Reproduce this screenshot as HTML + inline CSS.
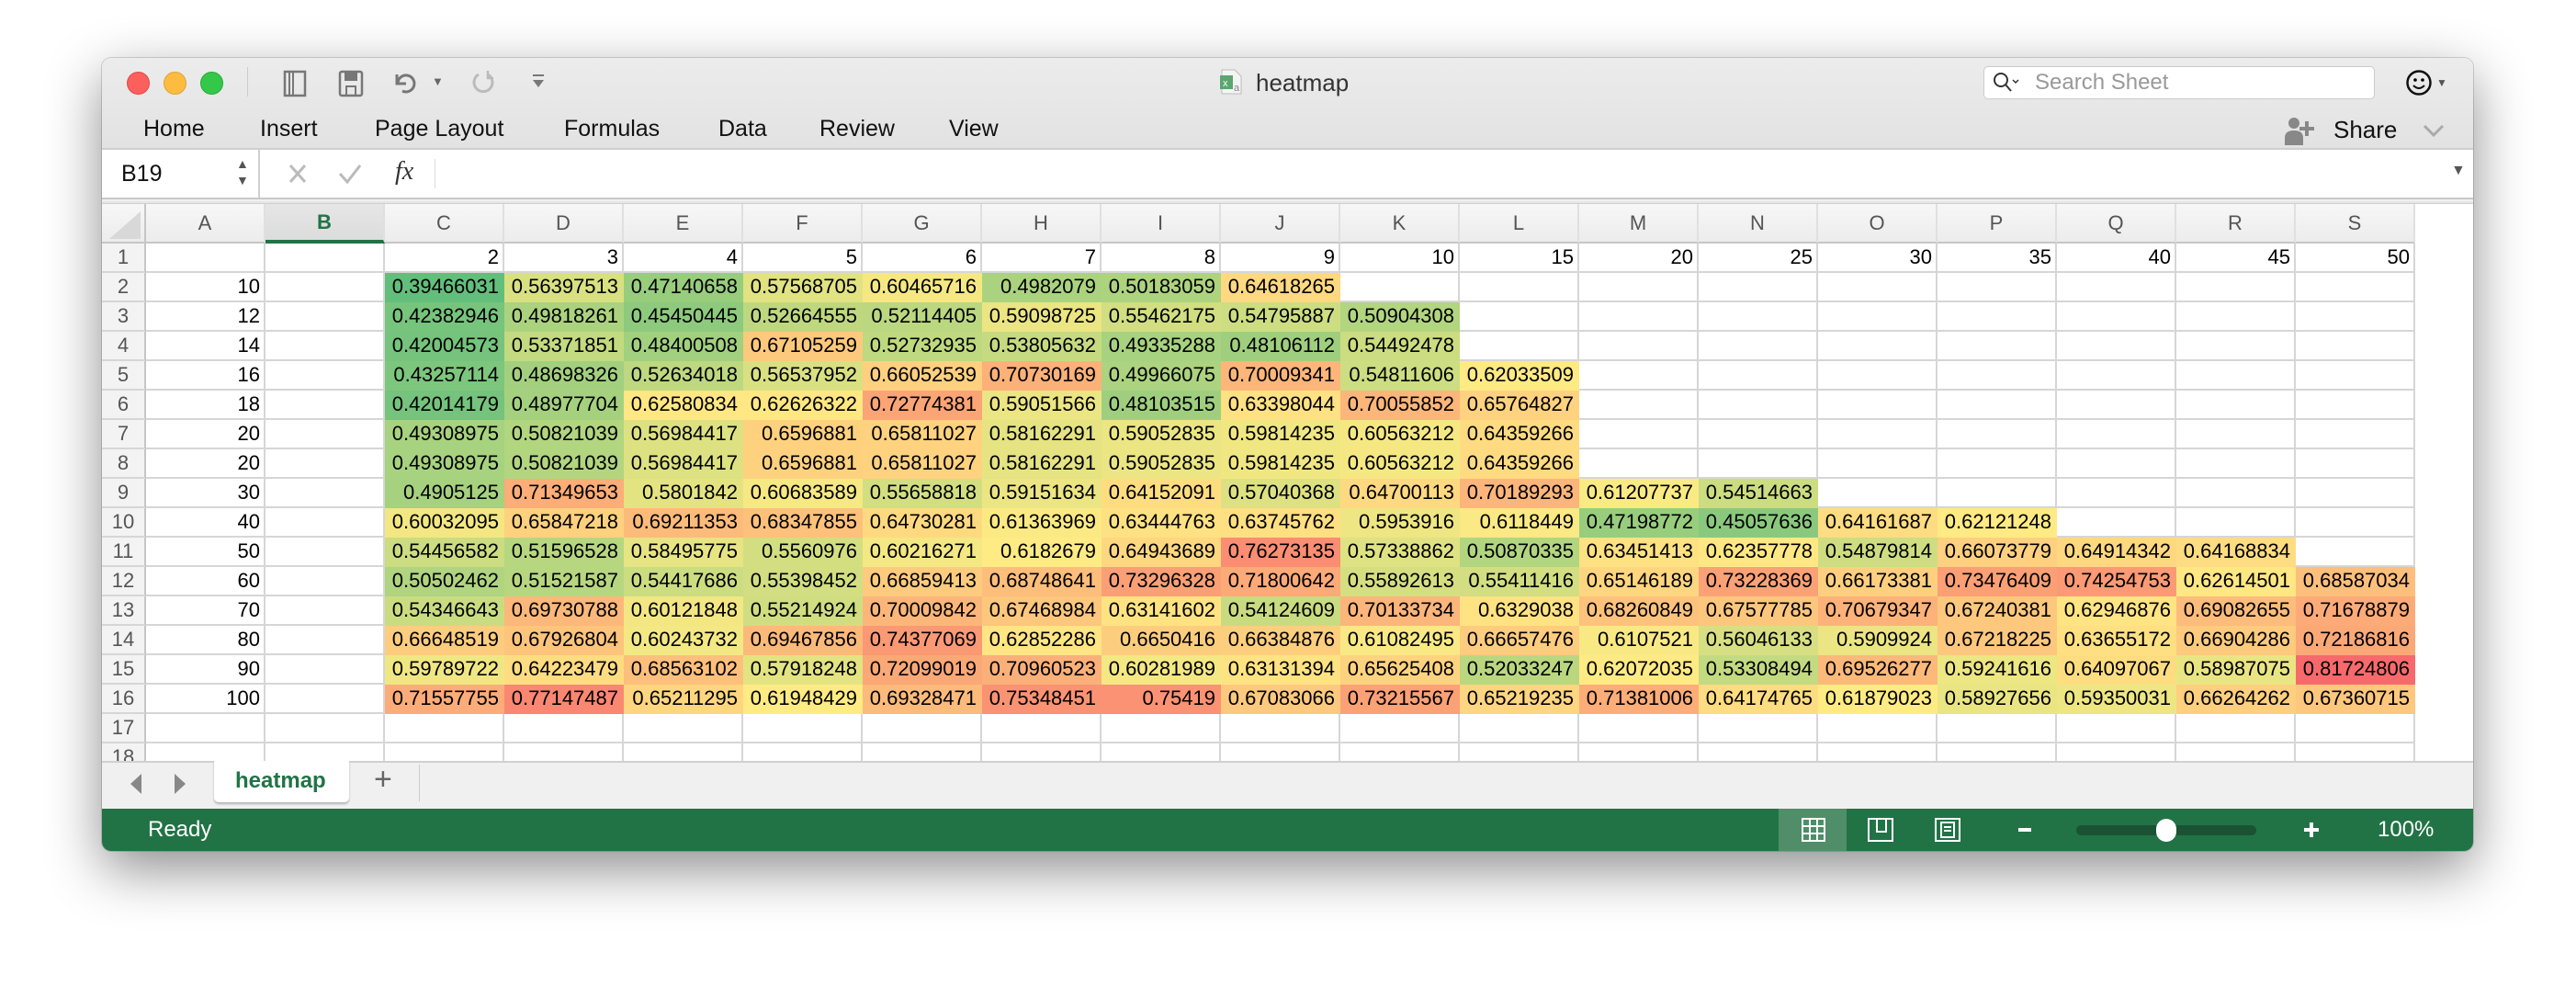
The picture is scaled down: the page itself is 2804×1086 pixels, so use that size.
<!DOCTYPE html>
<html><head><meta charset="utf-8">
<style>
*{box-sizing:border-box;margin:0;padding:0}
body{width:2804px;height:1086px;background:#fff;position:relative;overflow:hidden;font-family:"Liberation Sans",sans-serif}
#win{position:absolute;left:111px;top:63px;width:2581px;height:863px;border-radius:10px;overflow:hidden;box-shadow:0 20px 60px rgba(0,0,0,.45),0 0 0 1px rgba(0,0,0,.15);background:#f0f0f0}
.abs{position:absolute}
#top{left:0;top:0;width:2581px;height:100px;background:linear-gradient(#ececec,#e2e2e2);border-bottom:2px solid #cfcfcf}
.tl{position:absolute;top:15px;width:25px;height:25px;border-radius:50%}
.tab{position:absolute;top:63px;font-size:25px;color:#111}
#fbar{left:0;top:100px;width:2581px;height:54px;background:#fff;border-bottom:2px solid #c8c8c8}
#sep{left:0;top:156px;width:2581px;height:3px;background:#e6e6e6;border-bottom:1px solid #cfcfcf}
#gridwrap{left:0;top:159px;width:2581px;height:606px;overflow:hidden;background:#fff}
table{border-collapse:separate;border-spacing:0;table-layout:fixed;width:2518px}
td{height:32px;border-right:2px solid #d6d6d6;border-bottom:2px solid #d6d6d6;font-size:22px;text-align:right;padding:0 4px;white-space:nowrap;overflow:hidden;color:#000}
tr.h td{height:43px;background:linear-gradient(#f7f7f7,#ececec);color:#555;text-align:center;border-bottom:2px solid #c6c6c6;border-right:2px solid #e0e0e0}
td.rh{background:#f3f3f3;color:#555;text-align:center;padding:0;border-right:2px solid #c6c6c6}
tr.h td.sel{background:linear-gradient(#e6e6e6,#dcdcdc);color:#217346;font-weight:bold;border-bottom:4px solid #217346}
#tabs{left:0;top:765px;width:2581px;height:52px;background:#f0f0f0}
#status{left:0;top:817px;width:2581px;height:46px;background:#217346}
</style></head><body>
<div id="win">
 <div id="top" class="abs">
  <div class="tl" style="left:27px;background:#fc605c;border:1px solid #de4a46"></div>
  <div class="tl" style="left:67px;background:#fdbc40;border:1px solid #dea236"></div>
  <div class="tl" style="left:107px;background:#34c84a;border:1px solid #27aa35"></div>
  <div class="abs" style="left:158px;top:10px;width:1px;height:32px;background:#ccc"></div>
  <svg class="abs" style="left:195px;top:13px" width="30" height="30" viewBox="0 0 30 30"><rect x="4" y="2" width="22" height="26" fill="none" stroke="#777" stroke-width="2.5"/><path d="M9 2v26M13 2v26" stroke="#777" stroke-width="2"/></svg>
  <svg class="abs" style="left:256px;top:13px" width="30" height="30" viewBox="0 0 30 30"><rect x="3" y="2" width="24" height="26" rx="2" fill="none" stroke="#777" stroke-width="2.5"/><rect x="8" y="2" width="14" height="10" fill="#777"/><rect x="10" y="18" width="10" height="10" fill="none" stroke="#777" stroke-width="2"/></svg>
  <svg class="abs" style="left:315px;top:14px" width="30" height="26" viewBox="0 0 30 26"><path d="M6 4v10h10" fill="none" stroke="#777" stroke-width="3"/><path d="M7 13a9 9 0 1 1 5 9" fill="none" stroke="#777" stroke-width="3"/></svg>
  <div class="abs" style="left:359px;top:18px;font-size:13px;color:#666">▼</div>
  <svg class="abs" style="left:400px;top:12px" width="28" height="30" viewBox="0 0 28 30"><path d="M20 6a10 10 0 1 1-10 0" fill="none" stroke="#bbb" stroke-width="3"/><path d="M20 2v8h6" fill="none" stroke="#bbb" stroke-width="2.5"/></svg>
  <svg class="abs" style="left:467px;top:17px" width="16" height="20" viewBox="0 0 16 20"><path d="M2 2h12" stroke="#777" stroke-width="2"/><path d="M2 7h12l-6 8z" fill="#777"/></svg>
  <svg class="abs" style="left:1216px;top:12px" width="28" height="28" viewBox="0 0 28 28"><path d="M3 1h14l7 7v19H3z" fill="#f4f4f4" stroke="#bbb"/><rect x="1" y="7" width="14" height="15" fill="#5aa670"/><text x="4" y="19" font-size="11" fill="#fff" font-family="Liberation Sans">x</text><text x="16" y="24" font-size="11" fill="#888" font-family="Liberation Sans">a</text></svg>
  <div class="abs" style="left:1256px;top:12px;font-size:26px;color:#333">heatmap</div>
  <div class="abs" style="left:2048px;top:9px;width:426px;height:36px;background:#fff;border:1px solid #ccc;border-radius:5px"></div>
  <svg class="abs" style="left:2058px;top:15px" width="30" height="26" viewBox="0 0 30 26"><circle cx="9" cy="9" r="7" fill="none" stroke="#333" stroke-width="2"/><path d="M14 14l6 7" stroke="#333" stroke-width="2"/><path d="M22 9l3 3 3-3" fill="none" stroke="#333" stroke-width="1.5"/></svg>
  <div class="abs" style="left:2104px;top:13px;font-size:24px;color:#999">Search Sheet</div>
  <svg class="abs" style="left:2507px;top:12px" width="30" height="30" viewBox="0 0 30 30"><circle cx="15" cy="15" r="12.5" fill="none" stroke="#111" stroke-width="2.5"/><circle cx="11" cy="12" r="1.8"/><circle cx="19" cy="12" r="1.8"/><path d="M9 18q6 6 12 0" fill="none" stroke="#111" stroke-width="2"/></svg>
  <div class="abs" style="left:2541px;top:20px;font-size:12px;color:#555">▼</div>
  <svg class="abs" style="left:2376px;top:63px" width="36" height="32" viewBox="0 0 36 32"><circle cx="10" cy="8" r="6" fill="#888"/><path d="M0 32v-8q0-8 10-8t10 8v8z" fill="#888"/><path d="M24 6v16M16 14h16" stroke="#888" stroke-width="4"/></svg>
  <div class="abs" style="left:2429px;top:63px;font-size:26px;color:#111">Share</div>
  <svg class="abs" style="left:2526px;top:72px" width="24" height="16" viewBox="0 0 24 16"><path d="M2 2l10 10 10-10" fill="none" stroke="#aaa" stroke-width="3"/></svg>
  <div class="tab" style="left:45px">Home</div>
  <div class="tab" style="left:172px">Insert</div>
  <div class="tab" style="left:297px">Page Layout</div>
  <div class="tab" style="left:503px">Formulas</div>
  <div class="tab" style="left:671px">Data</div>
  <div class="tab" style="left:781px">Review</div>
  <div class="tab" style="left:922px">View</div>
 </div>
 <div id="fbar" class="abs">
  <div class="abs" style="left:0;top:0;width:172px;height:52px;border-right:2px solid #d0d0d0"></div>
  <div class="abs" style="left:21px;top:12px;font-size:25px;color:#111">B19</div>
  <div class="abs" style="left:146px;top:6px;font-size:14px;color:#555;line-height:18px">▲<br>▼</div>
  <svg class="abs" style="left:202px;top:14px" width="22" height="24" viewBox="0 0 22 24"><path d="M3 3l16 18M19 3L3 21" stroke="#bbb" stroke-width="3"/></svg>
  <svg class="abs" style="left:256px;top:14px" width="28" height="24" viewBox="0 0 28 24"><path d="M3 12l8 9L25 3" fill="none" stroke="#bbb" stroke-width="3"/></svg>
  <div class="abs" style="left:319px;top:8px;font-size:28px;font-style:italic;font-family:'Liberation Serif',serif;color:#333">fx</div>
  <div class="abs" style="left:362px;top:10px;width:1px;height:32px;background:#ddd"></div>
  <div class="abs" style="left:2557px;top:14px;font-size:16px;color:#555">▼</div>
 </div>
 <div id="sep" class="abs"></div>
 <div id="gridwrap" class="abs">
 <table id="g">
 <colgroup><col style="width:48px"><col style="width:130px" span="19"></colgroup>
 <tr class="h"><td style="position:relative;border-right:2px solid #c6c6c6"><svg style="position:absolute;left:8px;top:8px" width="34" height="30"><path d="M34 0V30H0z" fill="#d8d8d8"/></svg></td><td>A</td><td class="sel">B</td><td>C</td><td>D</td><td>E</td><td>F</td><td>G</td><td>H</td><td>I</td><td>J</td><td>K</td><td>L</td><td>M</td><td>N</td><td>O</td><td>P</td><td>Q</td><td>R</td><td>S</td><td>T</td></tr>
 <tr><td class="rh">1</td><td></td><td></td><td>2</td><td>3</td><td>4</td><td>5</td><td>6</td><td>7</td><td>8</td><td>9</td><td>10</td><td>15</td><td>20</td><td>25</td><td>30</td><td>35</td><td>40</td><td>45</td><td>50</td><td></td></tr>
 <tr><td class="rh">2</td><td>10</td><td></td><td class="v">0.39466031</td><td class="v">0.56397513</td><td class="v">0.47140658</td><td class="v">0.57568705</td><td class="v">0.60465716</td><td class="v">0.4982079</td><td class="v">0.50183059</td><td class="v">0.64618265</td><td></td><td></td><td></td><td></td><td></td><td></td><td></td><td></td><td></td><td></td></tr>
 <tr><td class="rh">3</td><td>12</td><td></td><td class="v">0.42382946</td><td class="v">0.49818261</td><td class="v">0.45450445</td><td class="v">0.52664555</td><td class="v">0.52114405</td><td class="v">0.59098725</td><td class="v">0.55462175</td><td class="v">0.54795887</td><td class="v">0.50904308</td><td></td><td></td><td></td><td></td><td></td><td></td><td></td><td></td><td></td></tr>
 <tr><td class="rh">4</td><td>14</td><td></td><td class="v">0.42004573</td><td class="v">0.53371851</td><td class="v">0.48400508</td><td class="v">0.67105259</td><td class="v">0.52732935</td><td class="v">0.53805632</td><td class="v">0.49335288</td><td class="v">0.48106112</td><td class="v">0.54492478</td><td></td><td></td><td></td><td></td><td></td><td></td><td></td><td></td><td></td></tr>
 <tr><td class="rh">5</td><td>16</td><td></td><td class="v">0.43257114</td><td class="v">0.48698326</td><td class="v">0.52634018</td><td class="v">0.56537952</td><td class="v">0.66052539</td><td class="v">0.70730169</td><td class="v">0.49966075</td><td class="v">0.70009341</td><td class="v">0.54811606</td><td class="v">0.62033509</td><td></td><td></td><td></td><td></td><td></td><td></td><td></td><td></td></tr>
 <tr><td class="rh">6</td><td>18</td><td></td><td class="v">0.42014179</td><td class="v">0.48977704</td><td class="v">0.62580834</td><td class="v">0.62626322</td><td class="v">0.72774381</td><td class="v">0.59051566</td><td class="v">0.48103515</td><td class="v">0.63398044</td><td class="v">0.70055852</td><td class="v">0.65764827</td><td></td><td></td><td></td><td></td><td></td><td></td><td></td><td></td></tr>
 <tr><td class="rh">7</td><td>20</td><td></td><td class="v">0.49308975</td><td class="v">0.50821039</td><td class="v">0.56984417</td><td class="v">0.6596881</td><td class="v">0.65811027</td><td class="v">0.58162291</td><td class="v">0.59052835</td><td class="v">0.59814235</td><td class="v">0.60563212</td><td class="v">0.64359266</td><td></td><td></td><td></td><td></td><td></td><td></td><td></td><td></td></tr>
 <tr><td class="rh">8</td><td>20</td><td></td><td class="v">0.49308975</td><td class="v">0.50821039</td><td class="v">0.56984417</td><td class="v">0.6596881</td><td class="v">0.65811027</td><td class="v">0.58162291</td><td class="v">0.59052835</td><td class="v">0.59814235</td><td class="v">0.60563212</td><td class="v">0.64359266</td><td></td><td></td><td></td><td></td><td></td><td></td><td></td><td></td></tr>
 <tr><td class="rh">9</td><td>30</td><td></td><td class="v">0.4905125</td><td class="v">0.71349653</td><td class="v">0.5801842</td><td class="v">0.60683589</td><td class="v">0.55658818</td><td class="v">0.59151634</td><td class="v">0.64152091</td><td class="v">0.57040368</td><td class="v">0.64700113</td><td class="v">0.70189293</td><td class="v">0.61207737</td><td class="v">0.54514663</td><td></td><td></td><td></td><td></td><td></td><td></td></tr>
 <tr><td class="rh">10</td><td>40</td><td></td><td class="v">0.60032095</td><td class="v">0.65847218</td><td class="v">0.69211353</td><td class="v">0.68347855</td><td class="v">0.64730281</td><td class="v">0.61363969</td><td class="v">0.63444763</td><td class="v">0.63745762</td><td class="v">0.5953916</td><td class="v">0.6118449</td><td class="v">0.47198772</td><td class="v">0.45057636</td><td class="v">0.64161687</td><td class="v">0.62121248</td><td></td><td></td><td></td><td></td></tr>
 <tr><td class="rh">11</td><td>50</td><td></td><td class="v">0.54456582</td><td class="v">0.51596528</td><td class="v">0.58495775</td><td class="v">0.5560976</td><td class="v">0.60216271</td><td class="v">0.6182679</td><td class="v">0.64943689</td><td class="v">0.76273135</td><td class="v">0.57338862</td><td class="v">0.50870335</td><td class="v">0.63451413</td><td class="v">0.62357778</td><td class="v">0.54879814</td><td class="v">0.66073779</td><td class="v">0.64914342</td><td class="v">0.64168834</td><td></td><td></td></tr>
 <tr><td class="rh">12</td><td>60</td><td></td><td class="v">0.50502462</td><td class="v">0.51521587</td><td class="v">0.54417686</td><td class="v">0.55398452</td><td class="v">0.66859413</td><td class="v">0.68748641</td><td class="v">0.73296328</td><td class="v">0.71800642</td><td class="v">0.55892613</td><td class="v">0.55411416</td><td class="v">0.65146189</td><td class="v">0.73228369</td><td class="v">0.66173381</td><td class="v">0.73476409</td><td class="v">0.74254753</td><td class="v">0.62614501</td><td class="v">0.68587034</td><td></td></tr>
 <tr><td class="rh">13</td><td>70</td><td></td><td class="v">0.54346643</td><td class="v">0.69730788</td><td class="v">0.60121848</td><td class="v">0.55214924</td><td class="v">0.70009842</td><td class="v">0.67468984</td><td class="v">0.63141602</td><td class="v">0.54124609</td><td class="v">0.70133734</td><td class="v">0.6329038</td><td class="v">0.68260849</td><td class="v">0.67577785</td><td class="v">0.70679347</td><td class="v">0.67240381</td><td class="v">0.62946876</td><td class="v">0.69082655</td><td class="v">0.71678879</td><td></td></tr>
 <tr><td class="rh">14</td><td>80</td><td></td><td class="v">0.66648519</td><td class="v">0.67926804</td><td class="v">0.60243732</td><td class="v">0.69467856</td><td class="v">0.74377069</td><td class="v">0.62852286</td><td class="v">0.6650416</td><td class="v">0.66384876</td><td class="v">0.61082495</td><td class="v">0.66657476</td><td class="v">0.6107521</td><td class="v">0.56046133</td><td class="v">0.5909924</td><td class="v">0.67218225</td><td class="v">0.63655172</td><td class="v">0.66904286</td><td class="v">0.72186816</td><td></td></tr>
 <tr><td class="rh">15</td><td>90</td><td></td><td class="v">0.59789722</td><td class="v">0.64223479</td><td class="v">0.68563102</td><td class="v">0.57918248</td><td class="v">0.72099019</td><td class="v">0.70960523</td><td class="v">0.60281989</td><td class="v">0.63131394</td><td class="v">0.65625408</td><td class="v">0.52033247</td><td class="v">0.62072035</td><td class="v">0.53308494</td><td class="v">0.69526277</td><td class="v">0.59241616</td><td class="v">0.64097067</td><td class="v">0.58987075</td><td class="v">0.81724806</td><td></td></tr>
 <tr><td class="rh">16</td><td>100</td><td></td><td class="v">0.71557755</td><td class="v">0.77147487</td><td class="v">0.65211295</td><td class="v">0.61948429</td><td class="v">0.69328471</td><td class="v">0.75348451</td><td class="v">0.75419</td><td class="v">0.67083066</td><td class="v">0.73215567</td><td class="v">0.65219235</td><td class="v">0.71381006</td><td class="v">0.64174765</td><td class="v">0.61879023</td><td class="v">0.58927656</td><td class="v">0.59350031</td><td class="v">0.66264262</td><td class="v">0.67360715</td><td></td></tr>
 <tr><td class="rh">17</td><td></td><td></td><td></td><td></td><td></td><td></td><td></td><td></td><td></td><td></td><td></td><td></td><td></td><td></td><td></td><td></td><td></td><td></td><td></td><td></td></tr>
 <tr><td class="rh">18</td><td></td><td></td><td></td><td></td><td></td><td></td><td></td><td></td><td></td><td></td><td></td><td></td><td></td><td></td><td></td><td></td><td></td><td></td><td></td><td></td></tr>
 </table>
 </div>
 <div id="tabs" class="abs">
  <div class="abs" style="left:0;top:0;width:2581px;height:2px;background:#d0d0d0"></div>
  <svg class="abs" style="left:31px;top:14px" width="14" height="22"><path d="M12 0v22L0 11z" fill="#888"/></svg>
  <svg class="abs" style="left:77px;top:14px" width="14" height="22"><path d="M2 0v22l12-11z" fill="#888"/></svg>
  <div class="abs" style="left:122px;top:0;width:147px;height:45px;background:#fff;border-radius:0 0 5px 5px;box-shadow:0 2px 2px rgba(0,0,0,.25)"></div>
  <div class="abs" style="left:145px;top:8px;font-size:24px;font-weight:bold;color:#217346">heatmap</div>
  <div class="abs" style="left:296px;top:1px;font-size:34px;color:#666">+</div>
  <div class="abs" style="left:345px;top:4px;width:1px;height:40px;background:#ccc"></div>
 </div>
 <div id="status" class="abs">
  <div class="abs" style="left:50px;top:9px;font-size:24px;color:#fff">Ready</div>
  <div class="abs" style="left:1825px;top:0;width:74px;height:46px;background:#4f8e68"></div>
  <svg class="abs" style="left:1850px;top:10px" width="26" height="26" viewBox="0 0 26 26"><rect x="1" y="1" width="24" height="24" fill="none" stroke="#fff" stroke-width="2"/><path d="M9 1v24M17 1v24M1 9h24M1 17h24" stroke="#fff" stroke-width="2"/></svg>
  <svg class="abs" style="left:1922px;top:10px" width="28" height="26" viewBox="0 0 28 26"><rect x="1" y="1" width="26" height="24" fill="none" stroke="#fff" stroke-width="2"/><path d="M10 1v14h10V1" fill="none" stroke="#fff" stroke-width="2"/></svg>
  <svg class="abs" style="left:1995px;top:10px" width="28" height="26" viewBox="0 0 28 26"><rect x="1" y="1" width="26" height="24" fill="none" stroke="#fff" stroke-width="2"/><rect x="7" y="5" width="14" height="16" fill="none" stroke="#fff" stroke-width="2"/><path d="M10 10h8M10 14h8" stroke="#fff" stroke-width="2"/></svg>
  <div class="abs" style="left:2086px;top:21px;width:14px;height:4px;background:#fff"></div>
  <div class="abs" style="left:2149px;top:18px;width:196px;height:11px;border-radius:6px;background:#1a5233"></div>
  <div class="abs" style="left:2236px;top:11px;width:22px;height:25px;border-radius:11px;background:#fff"></div>
  <div class="abs" style="left:2397px;top:21px;width:16px;height:4px;background:#fff"></div>
  <div class="abs" style="left:2403px;top:15px;width:4px;height:16px;background:#fff"></div>
  <div class="abs" style="left:2477px;top:9px;font-size:24px;color:#fff">100%</div>
 </div>
</div>
<script>
(function(){
 var cells=[].slice.call(document.querySelectorAll('td.v'));
 var vals=cells.map(function(c){return parseFloat(c.textContent)});
 var s=vals.slice().sort(function(a,b){return a-b});
 var mn=s[0],mx=s[s.length-1];
 var n=s.length,p=(n-1)*0.5,lo=Math.floor(p),md=s[lo]+(s[Math.min(lo+1,n-1)]-s[lo])*(p-lo);
 var G=[99,190,123],Y=[255,235,132],R=[248,105,107];
 function mix(a,b,t){return a.map(function(x,i){return Math.round(x+(b[i]-x)*t)})}
 cells.forEach(function(c,i){
  var v=vals[i],col;
  if(v<=md)col=mix(G,Y,(v-mn)/(md-mn));else col=mix(Y,R,(v-md)/(mx-md));
  var rgb='rgb('+col.join(',')+')';
  c.style.background=rgb;c.style.borderColor=rgb;
 });
})();
</script>
</body></html>
